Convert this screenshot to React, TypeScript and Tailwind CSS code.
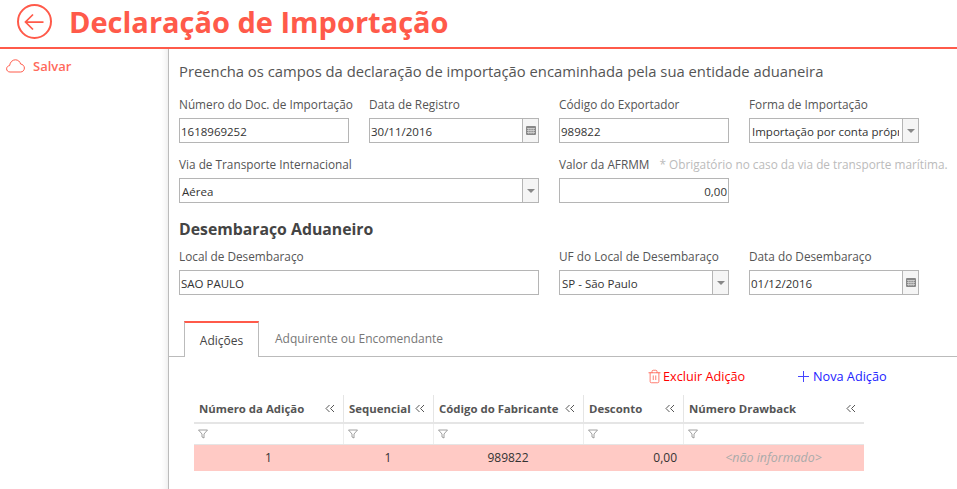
import React from 'react';
import { Trash2 } from 'lucide-react';

const FONT = "font-['Open_Sans','Noto_Sans',sans-serif]";

const Label = ({ children }: { children: React.ReactNode }) => (
  <div className="h-[22px] text-[11.8px] leading-[17px] text-[#555] whitespace-nowrap">{children}</div>
);

const TextField = ({ label, value, right, className }: { label: string; value: string; right?: boolean; className?: string }) => (
  <div className={className}>
    <Label>{label}</Label>
    <div className={`h-[25px] border border-[#b5b5b5] bg-white px-[1px] text-[11.5px] leading-[25px] text-[#333] ${right ? 'text-right' : ''}`}>
      {value}
    </div>
  </div>
);

const CalendarIcon = () => (
  <svg width="10" height="9" viewBox="0 0 10 9">
    <rect x="0" y="0" width="10" height="9" rx="1" fill="#888" />
    <path d="M1 2.5h8M1 4.500h8M1 6.500h8M2.800 2v6M5 2v6M7.200 2v6" stroke="#ddd" strokeWidth="0.7" />
  </svg>
);

const DateField = ({ label, value }: { label: string; value: string }) => (
  <div>
    <Label>{label}</Label>
    <div className="flex h-[25px] border border-[#b5b5b5] bg-white text-[11.5px] leading-[25px] text-[#333]">
      <div className="flex-1 px-[1px]">{value}</div>
      <div className="flex w-4 items-center justify-center border-l border-[#b5b5b5] bg-[#f5f5f5]">
        <CalendarIcon />
      </div>
    </div>
  </div>
);

const SelectField = ({ label, value, className }: { label: string; value: string; className?: string }) => (
  <div className={className}>
    <Label>{label}</Label>
    <div className="flex h-[25px] border border-[#b5b5b5] bg-white text-[11.5px] leading-[25px] text-[#333]">
      <div className="min-w-0 flex-1 overflow-hidden whitespace-nowrap pl-[2px] mr-[3px]">{value}</div>
      <div className="flex w-4 shrink-0 items-center justify-center border-l border-[#b5b5b5] bg-[#f5f5f5]">
        <div className="h-0 w-0 border-x-[4px] border-t-[4px] border-x-transparent border-t-[#888]" />
      </div>
    </div>
  </div>
);

const FilterIcon = () => (
  <svg width="10" height="10" viewBox="0 0 10 10" fill="none" stroke="#888" strokeWidth="0.8">
    <path d="M0.500 1h9L6 5v4L4 8V5z" />
  </svg>
);

const CollapseIcon = () => (
  <svg width="10" height="9" viewBox="0 0 10 9" fill="none" stroke="#555" strokeWidth="1">
    <path d="M4.500 1L1 4.500 4.500 8M9 1L5.500 4.500 9 8" />
  </svg>
);

const columns = [
  { title: 'Número da Adição', width: 'w-[149px]', value: '1', align: 'text-center' },
  { title: 'Sequencial', width: 'w-[90px]', value: '1', align: 'text-center' },
  { title: 'Código do Fabricante', width: 'w-[150px]', value: '989822', align: 'text-center' },
  { title: 'Desconto', width: 'w-[100px]', value: '0,00', align: 'text-right' },
  { title: 'Número Drawback', width: 'w-[181px]', value: '<não informado>', align: 'text-center' },
];

export default function App() {
  return (
    <div className={`${FONT} flex h-[489px] w-[957px] flex-col overflow-hidden bg-white`}>
      <header className="flex h-[49px] shrink-0 items-start border-b-2 border-[#ff5a4a] pl-[17px] pt-[4px]">
        <svg width="35" height="35" viewBox="0 0 35 35" fill="none" stroke="#ff5a4a" strokeWidth="1.75">
          <circle cx="17.500" cy="17.500" r="16.500" strokeWidth="2" />
          <path d="M8.500 18h18M16 10.500L8.500 18l7.500 7.500" />
        </svg>
        <h1 className="ml-[17px] text-[29px] font-bold leading-[36px] text-[#ff5a4a]">Declaração de Importação</h1>
      </header>

      <div className="flex min-h-0 flex-1">
        <aside className="flex h-full w-[169px] shrink-0 items-start gap-2 border-r border-[#bbb] bg-white pl-[6px] pt-[8px] shadow-[inset_-8px_0_8px_-8px_rgba(0,0,0,0.12)]">
          <svg width="19" height="14" viewBox="0 0 19 14" fill="none" stroke="#ff5a4a" strokeWidth="1" className="mt-[2px]">
            <path d="M4 13C2 13 .6 11.600.6 9.800.6 8 2 6.800 3.600 6.600 4 3 6.600.8 9.400.8c2.600 0 4.600 1.800 5.200 4.200 2 .2 3.800 1.900 3.800 4 0 2.200-1.600 4-3.800 4z" />
          </svg>
          <span className="text-[13px] font-semibold leading-[18px] text-[#ff6a5c]">Salvar</span>
        </aside>

        <main className="min-w-0 flex-1">
          <div className="pl-[10px] pr-[38px] pt-[12px]">
            <p className="h-[35px] text-[14.800px] leading-[20px] text-[#555]">
              Preencha os campos da declaração de importação encaminhada pela sua entidade aduaneira
            </p>
            <div className="grid grid-cols-[170px_170px_170px_170px] gap-x-[20px]">
              <TextField label="Número do Doc. de Importação" value="1618969252" />
              <DateField label="Data de Registro" value="30/11/2016" />
              <TextField label="Código do Exportador" value="989822" />
              <SelectField label="Forma de Importação" value="Importação por conta própria" />
            </div>
            <div className="mt-[13px] grid grid-cols-[170px_170px_170px_170px] gap-x-[20px]">
              <SelectField className="col-span-2" label="Via de Transporte Internacional" value="Aérea" />
              <div className="col-span-2">
                <Label>
                  Valor da AFRMM
                  <span className="ml-[10px] text-[#bbb]">* Obrigatório no caso da via de transporte marítima.</span>
                </Label>
                <div className="h-[25px] w-[170px] border border-[#b5b5b5] bg-white px-[1px] text-right text-[11.5px] leading-[25px] text-[#333]">
                  0,00
                </div>
              </div>
            </div>
            <h2 className="mt-[15px] h-[24px] text-[15.800px] font-bold leading-[22px] text-[#444]">Desembaraço Aduaneiro</h2>
            <div className="mt-[6px] grid grid-cols-[170px_170px_170px_170px] gap-x-[20px]">
              <TextField className="col-span-2" label="Local de Desembaraço" value="SAO PAULO" />
              <SelectField label="UF do Local de Desembaraço" value="SP - São Paulo" />
              <DateField label="Data do Desembaraço" value="01/12/2016" />
            </div>
          </div>

          <div className="mt-[26px] flex h-[36px] items-end border-b border-[#bbb] pl-[15px] text-[12px]">
            <div className="relative top-[1px] flex h-[36px] w-[75px] items-center justify-center border-x border-t-2 border-[#bbb] border-t-[#ff5a4a] bg-white pt-[1px] text-[#444]">
              Adições
            </div>
            <div className="flex h-[36px] items-center pl-[16px] pt-[2px] text-[#777]">Adquirente ou Encomendante</div>
          </div>

          <div className="flex h-[38px] items-center pl-[478px] pt-[1px] text-[12.700px]">
            <span className="flex w-[151px] items-center text-[#f00]">
              <Trash2 size={15} strokeWidth={1.25} className="mr-[1px] text-[#ff5a4a]" />
              Excluir Adição
            </span>
            <span className="flex items-center text-[#22f]">
              <svg width="11" height="11" viewBox="0 0 11 11" stroke="#44f" strokeWidth="1" className="mr-[4px]">
                <path d="M0 5.500h11M5.500 0v11" />
              </svg>
              Nova Adição
            </span>
          </div>

          <div className="ml-[25px] w-[670px] text-[11.400px]">
            <div className="flex h-[29px] border-b-2 border-[#e5e5e5]">
              {columns.map((c, i) => (
                <div key={c.title} className={`${c.width} flex items-center justify-between pl-[5px] pr-[8px] ${i > 0 ? 'border-l border-[#e5e5e5]' : ''}`}>
                  <span className="whitespace-nowrap font-bold text-[#555]">{c.title}</span>
                  <CollapseIcon />
                </div>
              ))}
            </div>
            <div className="flex h-[21px] border-b border-[#e5e5e5]">
              {columns.map((c, i) => (
                <div key={c.title} className={`${c.width} flex items-center pl-[4px] ${i > 0 ? 'border-l border-[#eee]' : ''}`}>
                  <FilterIcon />
                </div>
              ))}
            </div>
            <div className="flex h-[26px] bg-[#ffcac5] text-[12px] leading-[26px]">
              {columns.map((c, i) => (
                <div key={c.title} className={`${c.width} ${c.align} ${i === 3 ? 'pr-[6px]' : ''} ${i === 4 ? 'text-[12.400px] italic text-[#aaa]' : 'text-[#333]'}`}>
                  {c.value}
                </div>
              ))}
            </div>
          </div>
        </main>
      </div>
    </div>
  );
}
